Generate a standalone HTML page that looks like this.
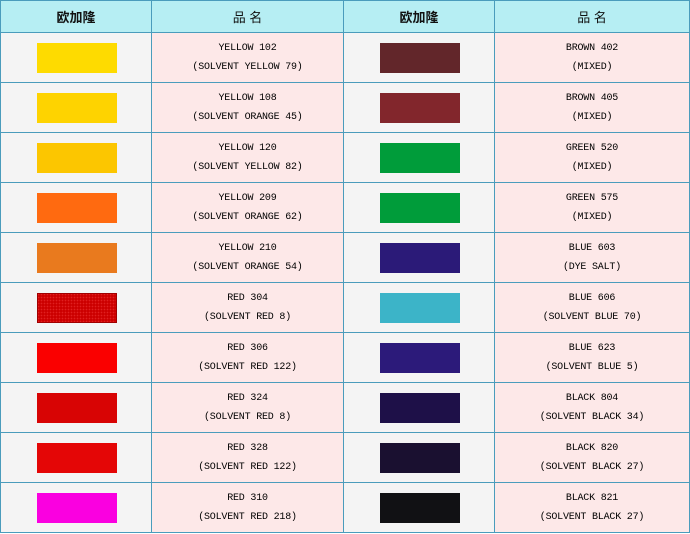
<!DOCTYPE html>
<html><head><meta charset="utf-8"><style>
body{margin:0;width:690px;height:534px;background:#fff;overflow:hidden}
table{position:absolute;left:0;top:0;border-collapse:collapse;table-layout:fixed;width:689px}
td{border:1px solid #4a9cbc;padding:0;text-align:center;height:49px}
tr.h td{height:31px;background:#b6eef3;font:13px "Liberation Sans","Noto Sans CJK SC",sans-serif;color:#111}
td.s{background:#f4f4f4}
td.n{background:#fde8e8;font:10px/19px "Liberation Mono","Noto Sans CJK SC",monospace;letter-spacing:-0.2px;color:#000}
.sw{width:80px;height:30px;margin:0 auto;position:relative;left:1px}
</style></head><body>
<table>
<colgroup><col style="width:151px"><col style="width:192px"><col style="width:151px"><col style="width:195px"></colgroup>
<tr class="h"><td><b>欧加隆</b></td><td>品 名</td><td><b>欧加隆</b></td><td>品 名</td></tr>
<tr><td class="s"><div class="sw" style="background:#fedb00"></div></td><td class="n">YELLOW 102<br>(SOLVENT YELLOW 79)</td><td class="s"><div class="sw" style="background:#62262a"></div></td><td class="n">BROWN 402<br>(MIXED)</td></tr>
<tr><td class="s"><div class="sw" style="background:#fed300"></div></td><td class="n">YELLOW 108<br>(SOLVENT ORANGE 45)</td><td class="s"><div class="sw" style="background:#82262c"></div></td><td class="n">BROWN 405<br>(MIXED)</td></tr>
<tr><td class="s"><div class="sw" style="background:#fcc600"></div></td><td class="n">YELLOW 120<br>(SOLVENT YELLOW 82)</td><td class="s"><div class="sw" style="background:#009c3a"></div></td><td class="n">GREEN 520<br>(MIXED)</td></tr>
<tr><td class="s"><div class="sw" style="background:#ff6a10"></div></td><td class="n">YELLOW 209<br>(SOLVENT ORANGE 62)</td><td class="s"><div class="sw" style="background:#009c3a"></div></td><td class="n">GREEN 575<br>(MIXED)</td></tr>
<tr><td class="s"><div class="sw" style="background:#e97a1e"></div></td><td class="n">YELLOW 210<br>(SOLVENT ORANGE 54)</td><td class="s"><div class="sw" style="background:#2b1a78"></div></td><td class="n">BLUE 603<br>(DYE SALT)</td></tr>
<tr><td class="s"><div class="sw" style="background:#cc0000;background-image:radial-gradient(#e02020 35%,transparent 40%);background-size:3px 3px;box-shadow:inset 0 0 0 1px #a00000"></div></td><td class="n">RED 304<br>(SOLVENT RED 8)</td><td class="s"><div class="sw" style="background:#3cb4c8"></div></td><td class="n">BLUE 606<br>(SOLVENT BLUE 70)</td></tr>
<tr><td class="s"><div class="sw" style="background:#fa0000"></div></td><td class="n">RED 306<br>(SOLVENT RED 122)</td><td class="s"><div class="sw" style="background:#2c1a7a"></div></td><td class="n">BLUE 623<br>(SOLVENT BLUE 5)</td></tr>
<tr><td class="s"><div class="sw" style="background:#d80404"></div></td><td class="n">RED 324<br>(SOLVENT RED 8)</td><td class="s"><div class="sw" style="background:#1e1048"></div></td><td class="n">BLACK 804<br>(SOLVENT BLACK 34)</td></tr>
<tr><td class="s"><div class="sw" style="background:#e40606"></div></td><td class="n">RED 328<br>(SOLVENT RED 122)</td><td class="s"><div class="sw" style="background:#1a1030"></div></td><td class="n">BLACK 820<br>(SOLVENT BLACK 27)</td></tr>
<tr><td class="s"><div class="sw" style="background:#fa00e0"></div></td><td class="n">RED 310<br>(SOLVENT RED 218)</td><td class="s"><div class="sw" style="background:#111114"></div></td><td class="n">BLACK 821<br>(SOLVENT BLACK 27)</td></tr>
</table>
</body></html>
